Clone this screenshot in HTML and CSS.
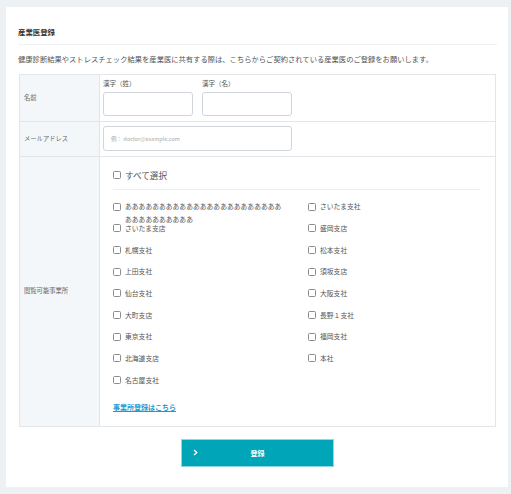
FILE: index.html
```html
<!DOCTYPE html>
<html lang="ja">
<head>
<meta charset="utf-8">
<title>産業医登録</title>
<link rel="stylesheet" href="styles.css">
</head>
<body>
<div class="card">
  <h1 class="title">産業医登録</h1>
  <p class="desc">健康診断結果やストレスチェック結果を産業医に共有する際は、こちらからご契約されている産業医のご登録をお願いします。</p>
  <div class="form-table">
    <div class="th row1">名前</div>
    <div class="td row1">
      <div class="name-group">
        <div class="field">
          <div class="field-label">漢字（姓）</div>
          <div class="input name"></div>
        </div>
        <div class="field">
          <div class="field-label">漢字（名）</div>
          <div class="input name"></div>
        </div>
      </div>
    </div>
    <div class="th row2">メールアドレス</div>
    <div class="td row2">
      <div class="input email"><span class="placeholder">例： doctor@example.com</span></div>
    </div>
    <div class="th row3">閲覧可能事業所</div>
    <div class="td row3">
      <div class="select-all"><span class="cb"></span><span>すべて選択</span></div>
      <div class="sep"></div>
      <div class="items">
        <div class="item"><span class="cb"></span><span class="txt long">あああああああああああああああああああああああああああああああああ</span></div>
        <div class="item"><span class="cb"></span><span class="txt">さいたま支社</span></div>
        <div class="item"><span class="cb"></span><span class="txt">さいたま支店</span></div>
        <div class="item"><span class="cb"></span><span class="txt">盛岡支店</span></div>
        <div class="item"><span class="cb"></span><span class="txt">札幌支社</span></div>
        <div class="item"><span class="cb"></span><span class="txt">松本支社</span></div>
        <div class="item"><span class="cb"></span><span class="txt">上田支社</span></div>
        <div class="item"><span class="cb"></span><span class="txt">須坂支店</span></div>
        <div class="item"><span class="cb"></span><span class="txt">仙台支社</span></div>
        <div class="item"><span class="cb"></span><span class="txt">大阪支社</span></div>
        <div class="item"><span class="cb"></span><span class="txt">大町支店</span></div>
        <div class="item"><span class="cb"></span><span class="txt">長野１支社</span></div>
        <div class="item"><span class="cb"></span><span class="txt">東京支社</span></div>
        <div class="item"><span class="cb"></span><span class="txt">福岡支社</span></div>
        <div class="item"><span class="cb"></span><span class="txt">北海道支店</span></div>
        <div class="item"><span class="cb"></span><span class="txt">本社</span></div>
        <div class="item"><span class="cb"></span><span class="txt">名古屋支社</span></div>
      </div>
      <a class="link" href="#">事業所登録はこちら</a>
    </div>
  </div>
  <div class="btn-wrap">
    <button class="btn" type="button">
      <svg class="chev" width="5" height="7" viewBox="0 0 5 7"><polyline points="1,1 3.8,3.5 1,6" fill="none" stroke="#fff" stroke-width="1.3"/></svg>
      <span class="btn-text">登録</span>
    </button>
  </div>
</div>
</body>
</html>
```

FILE: styles.css
```css
* { box-sizing: border-box; }
html, body { margin: 0; padding: 0; }
body {
  background: #edf1f4;
  font-family: "Noto Sans CJK JP", "Noto Sans", sans-serif;
  color: #555;
  width: 511px;
  height: 494px;
  overflow: hidden;
}
.card {
  margin: 7px 3px 0 6px;
  background: #fff;
  height: 480px;
  padding: 20px 11px 0 12px;
}
.title {
  margin: 0;
  font-size: 7.4px;
  line-height: 10px;
  font-weight: bold;
  color: #333;
  padding-bottom: 7px;
  border-bottom: 1px solid #eef0f2;
}
.desc {
  margin: 9px 0 0;
  font-size: 7.3px;
  line-height: 10px;
  color: #555;
  white-space: nowrap;
}
.form-table {
  margin: 10px 1px 0;
  display: grid;
  grid-template-columns: 80px 1fr;
  border: 1px solid #e2e6ea;
}
.th {
  background: #f3f7fa;
  border-right: 1px solid #e2e6ea;
  font-size: 6.3px;
  line-height: 8px;
  color: #666;
  display: flex;
  align-items: center;
  padding-left: 4px;
}
.row1, .row2 { border-bottom: 1px solid #e2e6ea; }
.td.row1 { padding: 4px 0 5px 3px; }
.name-group { display: flex; gap: 9px; }
.field-label {
  font-size: 6.5px;
  line-height: 8px;
  color: #555;
  margin-bottom: 5px;
}
.input {
  border: 1px solid #cfd5db;
  border-radius: 3px;
  background: #fff;
}
.input.name { width: 90px; height: 24px; }
.td.row2 { padding: 4px 0 5px 3px; }
.input.email {
  width: 189px;
  height: 25px;
  display: flex;
  align-items: center;
  padding-left: 7px;
}
.placeholder {
  font-size: 5.5px;
  color: #aaa;
}
.td.row3 { padding: 12px 15px 11px 13px; }
.select-all {
  display: flex;
  align-items: center;
  height: 12px;
  font-size: 8.6px;
  color: #555;
}
.cb {
  flex: none;
  width: 8px;
  height: 8px;
  border: 1px solid #8c8c8c;
  border-radius: 1.5px;
  background: #fff;
  margin-right: 4px;
}
.sep {
  margin-top: 8px;
  border-top: 1px solid #eceef0;
}
.items {
  margin-top: 6px;
  display: grid;
  grid-template-columns: 195px 1fr;
  grid-auto-rows: 21.67px;
}
.item {
  display: flex;
  align-items: flex-start;
  padding-top: 4.3px;
  font-size: 6.8px;
  line-height: 13px;
  color: #555;
}
.item .cb { margin-top: 2.5px; }
.txt.long {
  max-width: 160px;
  word-break: break-all;
}
.link {
  display: inline-block;
  margin-top: 9px;
  font-size: 7px;
  line-height: 10px;
  font-weight: bold;
  color: #1d9bd1;
  text-decoration: underline;
}
.btn-wrap {
  display: flex;
  justify-content: center;
  margin-top: 12px;
}
.btn {
  width: 153px;
  height: 28px;
  background: #00a5b7;
  border: 1px solid #8fd8e0;
  padding: 0 0 0 11px;
  display: flex;
  align-items: center;
  font-family: inherit;
  color: #fff;
}
.chev { flex: none; }
.btn-text {
  flex: 1;
  text-align: center;
  padding-right: 16px;
  font-size: 7px;
  font-weight: bold;
}
```
